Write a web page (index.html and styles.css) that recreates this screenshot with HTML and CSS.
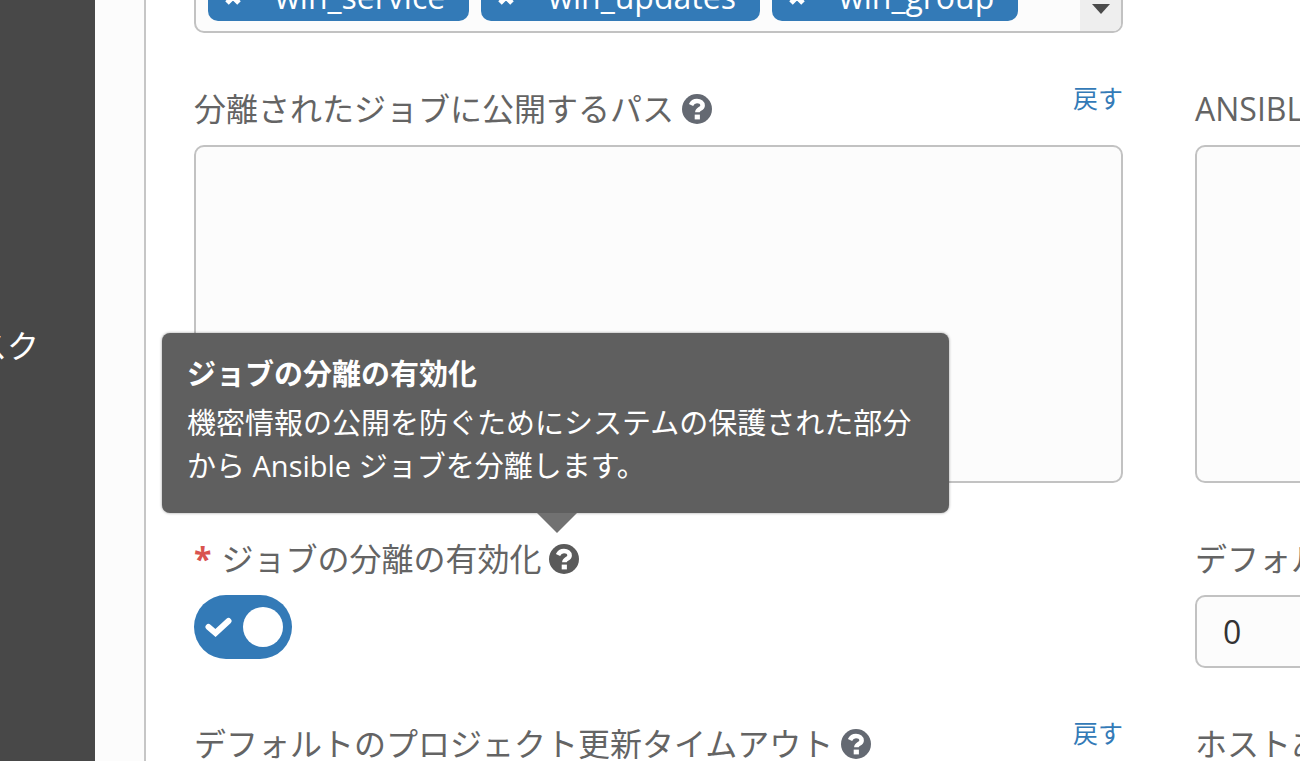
FILE: index.html
```
<!DOCTYPE html>
<html lang="ja">
<head>
    <meta charset="UTF-8">
    <meta name="viewport" content="width=device-width, initial-scale=1.0">
    <title>ジョブ設定</title>
    <link rel="stylesheet" href="styles.css">
</head>
<body>
<svg class="sprite" aria-hidden="true">
    <symbol id="icon-help" viewBox="0 0 30 30">
        <circle cx="15" cy="15" r="15" fill="currentColor"></circle>
        <path d="M9 11C10.300 8 12.400 7 15 7c3.400 0 5.600 1.700 5.600 4.400 0 3.600-5.200 3.400-5.200 6.800" fill="none" stroke="#fff" stroke-width="4.600"></path>
        <path d="M12.700 20.600h5.200v4.800h-5.200z" fill="#fff"></path>
    </symbol>
    <symbol id="icon-times" viewBox="0 0 18 18">
        <path d="M3 3l12 12M15 3L3 15" stroke="currentColor" stroke-width="5"></path>
    </symbol>
</svg>

<div class="layout">
    <nav class="sidebar">
        <a class="sidebar-link" href="#">タスク</a>
    </nav>

    <main class="panel">
        <form class="form">
            <div class="field field-modules">
                <ul class="tags">
                    <li class="tag">
                        <button type="button" class="tag-remove" aria-label="win_service を削除"><svg class="tag-icon"><use href="#icon-times"></use></svg></button>
                        win_service
                    </li>
                    <li class="tag">
                        <button type="button" class="tag-remove" aria-label="win_updates を削除"><svg class="tag-icon"><use href="#icon-times"></use></svg></button>
                        win_updates
                    </li>
                    <li class="tag">
                        <button type="button" class="tag-remove" aria-label="win_group を削除"><svg class="tag-icon"><use href="#icon-times"></use></svg></button>
                        win_group
                    </li>
                </ul>
                <button type="button" class="tags-toggle" aria-label="開く">
                    <svg class="caret" viewBox="0 0 20 10"><path d="M1 0h18l-9 10z" fill="currentColor"></path></svg>
                </button>
            </div>
            <div class="field"></div>

            <div class="field">
                <div class="label-row">
                    <label for="paths">分離されたジョブに公開するパス</label>
                    <button type="button" class="help" aria-label="ヘルプ"><svg class="help-icon"><use href="#icon-help"></use></svg></button>
                    <a class="revert" href="#">戻す</a>
                </div>
                <textarea id="paths" class="input input-area"></textarea>
            </div>
            <div class="field">
                <div class="label-row">
                    <label for="callbacks">ANSIBLE コールバックプラグイン</label>
                </div>
                <textarea id="callbacks" class="input input-area"></textarea>
            </div>

            <div class="field">
                <div class="label-row">
                    <span class="required">*</span>
                    <label for="isolation">ジョブの分離の有効化</label>
                    <button type="button" class="help help-active" aria-label="ヘルプ" aria-describedby="isolation-tip"><svg class="help-icon"><use href="#icon-help"></use></svg></button>
                    <div id="isolation-tip" class="popover" role="tooltip">
                        <h3 class="popover-title">ジョブの分離の有効化</h3>
                        <p class="popover-text">機密情報の公開を防ぐためにシステムの保護された部分から Ansible ジョブを分離します。</p>
                    </div>
                </div>
                <div class="switch">
                    <input type="checkbox" id="isolation" class="switch-input" checked>
                    <svg class="switch-check" viewBox="0 0 27 20"><path d="M3.500 10l7 6L23.500 4" fill="none" stroke="currentColor" stroke-width="6" stroke-linecap="round"></path></svg>
                    <span class="switch-knob"></span>
                </div>
            </div>
            <div class="field">
                <div class="label-row">
                    <label for="job-timeout">デフォルトのジョブタイムアウト</label>
                </div>
                <input type="text" id="job-timeout" class="input" value="0">
            </div>

            <div class="field">
                <div class="label-row">
                    <label for="project-timeout">デフォルトのプロジェクト更新タイムアウト</label>
                    <button type="button" class="help" aria-label="ヘルプ"><svg class="help-icon"><use href="#icon-help"></use></svg></button>
                    <a class="revert" href="#">戻す</a>
                </div>
                <input type="text" id="project-timeout" class="input" value="0">
            </div>
            <div class="field">
                <div class="label-row">
                    <label for="fact-timeout">ホストあたりの Ansible ファクトキャッシュのタイムアウト</label>
                </div>
                <input type="text" id="fact-timeout" class="input" value="0">
            </div>
        </form>
    </main>
</div>
</body>
</html>
```
FILE: styles.css
```
* {
    box-sizing: border-box;
    margin: 0;
    padding: 0;
}

body {
    background-color: #fcfcfc;
    color: #646464;
    font-family: "Open Sans", "Noto Sans CJK JP", sans-serif;
    font-size: 32px;
    overflow: hidden;
}

button,
input,
textarea {
    font: inherit;
}

button {
    border: none;
    background: none;
    cursor: pointer;
}

.sprite {
    display: none;
}

.layout {
    display: flex;
    height: 100vh;
}

/* Sidebar */
.sidebar {
    display: flex;
    flex-shrink: 0;
    justify-content: flex-end;
    width: 95px;
    padding: 324px 56px 0 0;
    margin-right: 49px;
    background-color: #484848;
    overflow: hidden;
}

.sidebar-link {
    color: #fff;
    line-height: 44px;
    white-space: nowrap;
    text-decoration: none;
}

/* Form */
.panel {
    flex: 1;
    min-width: 0;
    padding-left: 48px;
    border-left: 2px solid #c6c6c6;
    background-color: #fff;
    overflow: hidden;
}

.form {
    display: grid;
    grid-template-columns: repeat(2, 84%);
    gap: 54px 72px;
}

.label-row {
    position: relative;
    display: flex;
    align-items: center;
    height: 44px;
    margin-bottom: 14px;
    line-height: 44px;
    white-space: nowrap;
}

.required {
    margin-right: 10px;
    color: #d9534f;
    font-weight: 700;
}

.help {
    display: flex;
    margin-left: 8px;
    color: #646972;
}

.help-active {
    color: #5a5a5a;
}

.help-icon {
    width: 30px;
    height: 30px;
}

.revert {
    align-self: flex-start;
    margin-left: auto;
    color: #337ab7;
    font-size: 25px;
    line-height: 22px;
    text-decoration: none;
}

.input {
    display: block;
    width: 100%;
    height: 73px;
    padding: 0 26px;
    border: 2px solid #c2c2c2;
    border-radius: 10px;
    background-color: #fcfcfc;
    color: #333;
    resize: none;
}

.input-area {
    height: 338px;
    padding: 12px 26px;
}

/* Module tags */
.field-modules {
    display: flex;
    align-items: flex-end;
    height: 33px;
    border: 2px solid #c2c2c2;
    border-top: none;
    border-radius: 0 0 10px 10px;
    background-color: #fcfcfc;
    overflow: hidden;
}

.tags {
    display: flex;
    flex: 1;
    gap: 12px;
    padding: 0 0 10px 12px;
    list-style: none;
}

.tag {
    display: flex;
    align-items: center;
    height: 48px;
    padding: 0 24px 0 16px;
    border-radius: 10px;
    background-color: #337ab7;
    color: #fff;
    font-size: 32px;
    line-height: 44px;
}

.tag-remove {
    display: flex;
    margin-right: 33px;
    color: #fff;
}

.tag-icon {
    width: 18px;
    height: 18px;
}

.tags-toggle {
    display: flex;
    align-items: flex-end;
    justify-content: center;
    width: 41px;
    height: 100%;
    padding-bottom: 17px;
    background-color: #eee;
    color: #4a4a4a;
}

.caret {
    width: 20px;
    height: 10px;
}

/* Switch */
.switch {
    position: relative;
    display: flex;
    align-items: center;
    justify-content: space-between;
    width: 98px;
    height: 64px;
    padding: 0 9px 0 11px;
    border-radius: 32px;
    background-color: #337ab7;
    color: #fff;
}

.switch-input {
    position: absolute;
    inset: 0;
    width: 100%;
    height: 100%;
    opacity: 0;
    cursor: pointer;
}

.switch-check {
    width: 27px;
    height: 20px;
}

.switch-knob {
    width: 40px;
    height: 40px;
    border-radius: 50%;
    background-color: #fff;
}

/* Popover */
.popover {
    position: absolute;
    bottom: 68px;
    left: -32px;
    width: 787px;
    padding: 19px 25px 26px;
    border-radius: 8px;
    background-color: #5f5f5f;
    box-shadow: 0 0 3px rgba(0, 0, 0, 0.4);
    color: #fff;
    font-size: 29px;
    line-height: 43px;
    white-space: normal;
}

.popover::after {
    content: "";
    position: absolute;
    top: 100%;
    left: 375px;
    border: 20px solid transparent;
    border-top-color: #717171;
    border-bottom: none;
}

.popover-title {
    margin-bottom: 6px;
    font-size: 29px;
    font-weight: 700;
}
```
